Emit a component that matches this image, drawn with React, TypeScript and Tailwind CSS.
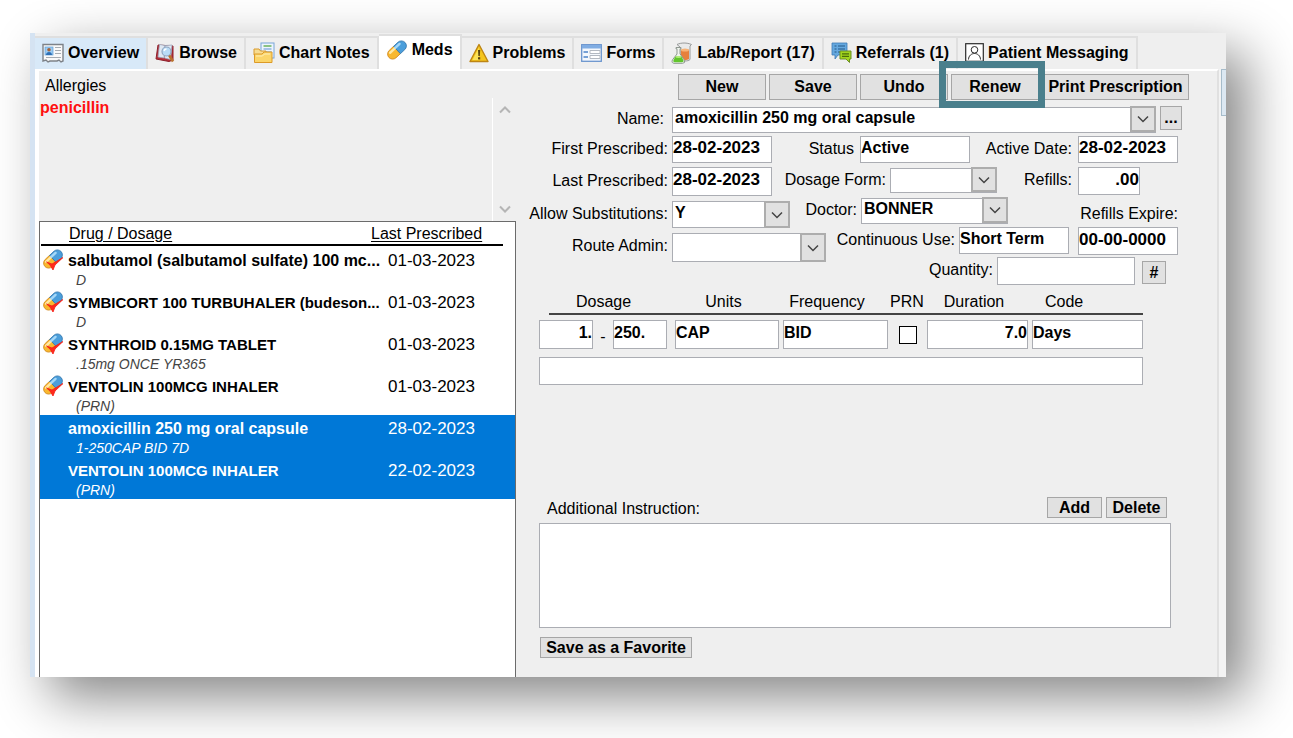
import { useState, type ReactNode } from "react";

type Med = {
  name: string;
  dose: string;
  date: string;
  icon: boolean;
  selected: boolean;
};

const meds: Med[] = [
  { name: "salbutamol (salbutamol sulfate) 100 mc...", dose: "D", date: "01-03-2023", icon: true, selected: false },
  { name: "SYMBICORT 100 TURBUHALER (budeson...", dose: "D", date: "01-03-2023", icon: true, selected: false },
  { name: "SYNTHROID 0.15MG TABLET", dose: ".15mg ONCE YR365", date: "01-03-2023", icon: true, selected: false },
  { name: "VENTOLIN 100MCG INHALER", dose: "(PRN)", date: "01-03-2023", icon: true, selected: false },
  { name: "amoxicillin 250 mg oral capsule", dose: "1-250CAP BID 7D", date: "28-02-2023", icon: false, selected: true },
  { name: "VENTOLIN 100MCG INHALER", dose: "(PRN)", date: "22-02-2023", icon: false, selected: true },
];

function OverviewIcon() {
  return (
    <svg width="22" height="20" viewBox="0 0 22 20">
      <path d="M1 1.500h20V18l-2 1-2-2-2 1H8l-2 1-2-2-3 1z" fill="#fafafa" stroke="#7d8288" strokeWidth="1.400" />
      <rect x="3" y="4" width="8" height="8" fill="#9ccbf2" stroke="#5f9fd6" strokeWidth=".7" />
      <circle cx="7" cy="6.700" r="1.800" fill="#a4643a" />
      <path d="M4 12c0-4 6-4 6 0z" fill="#2d6fb5" />
      <path d="M13 4.500h6M13 7.500h6M13 10.500h6M4 14.500h15" stroke="#a6acb2" strokeWidth="1.200" />
    </svg>
  );
}

function BrowseIcon() {
  return (
    <svg width="20" height="20" viewBox="0 0 20 20">
      <path d="M3 2 1 16l13 2.500 4-1.500V3z" fill="#b5303a" stroke="#8d1f2a" />
      <path d="M4.500 1.500 3 14l6 1 1-12.500zM10 2.500 9.500 15l6 1.500L17 2z" fill="#dfe8f3" stroke="#9aa7bb" strokeWidth=".7" />
      <path d="m14 12 4 6.500" stroke="#b8722e" strokeWidth="2.600" />
      <circle cx="11.500" cy="8.500" r="4.500" fill="#b9dcf7" stroke="#8fa5c0" strokeWidth="1.200" />
      <path d="M9 8q.5-2 2.500-2" stroke="#fff" strokeWidth="1.300" fill="none" />
    </svg>
  );
}

function NotesIcon() {
  return (
    <svg width="22" height="22" viewBox="0 0 22 22">
      <rect x="8" y="1" width="13" height="15" fill="#edf5fd" stroke="#78a5d8" />
      <path d="M10.500 4h8" stroke="#69b05b" strokeWidth="1.500" />
      <path d="M10.500 7h8M10.500 10h8M14 13h5" stroke="#8db2df" strokeWidth="1.300" />
      <path d="M1 7h5l1.500 2H13v4H1z" fill="#f7dc91" stroke="#d99a2d" />
      <path d="M1.500 12H9l2-2h8v10.500H1.500z" fill="#fbd569" stroke="#dc9a28" />
      <path d="M3 14h6.500l2-2H17" stroke="#fff0b8" fill="none" />
    </svg>
  );
}

function PillIcon({ checked = false }: { checked?: boolean }) {
  return (
    <svg width="22" height="22" viewBox="0 0 22 22">
      <g transform="rotate(-43 11 11)">
        <path d="M11 6H5a5 5 0 0 0 0 10h6z" fill="#f9b82f" stroke="#cf861c" strokeWidth=".8" />
        <path d="M11 6h6a5 5 0 0 1 0 10h-6z" fill="#4b9edb" stroke="#3577ad" strokeWidth=".8" />
        <path d="M4 8.300h6.500" stroke="#ffe8a6" strokeWidth="2.400" strokeLinecap="round" />
        <path d="M11.500 8.300H17" stroke="#a5d8f8" strokeWidth="2.400" strokeLinecap="round" />
      </g>
      {checked && <path d="m4.500 14 5.500 2L21 9.500 13 17l-2 5-3-5z" fill="#ff2a1c" stroke="#f41c14" strokeWidth=".8" />}
    </svg>
  );
}

function WarningIcon() {
  return (
    <svg width="20" height="20" viewBox="0 0 20 20">
      <path d="M10 1.500 19 18.500H1z" fill="#f5c51d" stroke="#bd8514" strokeWidth="1.400" strokeLinejoin="round" />
      <path d="M10 4.500 3.500 17H10z" fill="#fbe25a" />
      <path d="M9 7h2.200l-.4 6H9.400z" fill="#5a4510" />
      <rect x="9" y="14.200" width="2.200" height="2.200" fill="#5a4510" />
    </svg>
  );
}

function FormsIcon() {
  return (
    <svg width="21" height="18" viewBox="0 0 21 18">
      <rect x=".7" y=".7" width="19.600" height="16.600" fill="#f4f8fd" stroke="#6a94cd" strokeWidth="1.300" />
      <path d="M1 1h19v3.500H1z" fill="#80ade3" />
      <path d="M2.500 8H7M2.500 13H7" stroke="#4c83c8" strokeWidth="1.400" />
      <path d="M9 6.500h10v3H9zM9 11.500h10v3H9z" fill="#fff" stroke="#b3b9c1" />
    </svg>
  );
}

function LabIcon() {
  return (
    <svg width="22" height="22" viewBox="0 0 22 22">
      <path d="M6 2.500c4-2 10-2 14.500 0L19 4v13.500c-2 2-8 2-10 0V5z" fill="#e9eaea" stroke="#989a9a" />
      <path d="M10 8c2-1.500 6-1.500 8 0v9c-2 1.500-6 1.500-8 0z" fill="#e6803c" />
      <ellipse cx="14" cy="8" rx="4" ry="1.500" fill="#f7b377" />
      <path d="M5 5.500h5v1.300H9v5l4.500 6.500q1 3-2 3H3q-3-.5-1.500-3.500L6 12V6.800H5z" fill="#f0f4ee" stroke="#8f9891" />
      <path d="M4.500 14.500h6l2 4q.5 1.800-1.500 1.800H3.500q-2-.5-1-2.300z" fill="#62c52c" />
      <ellipse cx="7.500" cy="15" rx="3" ry="1.100" fill="#b0ec75" />
    </svg>
  );
}

function ReferralIcon() {
  return (
    <svg width="21" height="21" viewBox="0 0 21 21">
      <path d="M1 1h15v12H7l-3 4v-4H1z" fill="#64a8df" stroke="#3c78b4" strokeWidth=".8" />
      <path d="M3.500 4h2M7 4h7M3.500 7h2M7 7h7M3.500 10h2M7 10h3" stroke="#245987" strokeWidth="1.100" />
      <path d="M9 9h11v8h-1.500v3.500L15 17H9z" fill="#a1d51d" stroke="#6d8f22" />
      <path d="M11 11.800h7M11 14.300h7" stroke="#4b6c0b" strokeWidth="1.200" />
    </svg>
  );
}

function PersonIcon() {
  return (
    <svg width="19" height="19" viewBox="0 0 19 19" fill="none" stroke="#2b2b2b">
      <rect x=".7" y=".7" width="17.600" height="17.600" fill="#fff" strokeWidth="1.200" />
      <circle cx="9.500" cy="6.800" r="3.300" />
      <path d="M3.500 16.500c.3-8 11.700-8 12 0" />
    </svg>
  );
}

function Chevron({ up = false, className = "" }: { up?: boolean; className?: string }) {
  return (
    <svg width="12" height="8" viewBox="0 0 12 8" className={className} fill="none" stroke="currentColor">
      <path d={up ? "M1 6.500 6 1.500 11 6.500" : "M1 1.500 6 6.500 11 1.500"} />
    </svg>
  );
}

const tabs: { label: string; icon: ReactNode }[] = [
  { label: "Overview", icon: <OverviewIcon /> },
  { label: "Browse", icon: <BrowseIcon /> },
  { label: "Chart Notes", icon: <NotesIcon /> },
  { label: "Meds", icon: <PillIcon /> },
  { label: "Problems", icon: <WarningIcon /> },
  { label: "Forms", icon: <FormsIcon /> },
  { label: "Lab/Report (17)", icon: <LabIcon /> },
  { label: "Referrals (1)", icon: <ReferralIcon /> },
  { label: "Patient Messaging", icon: <PersonIcon /> },
];

const fieldBase = "border border-[#abadb3] bg-white font-bold outline-none";
const labelBase = "whitespace-nowrap text-right leading-[26px]";

function Field({ id, value, className = "", label }: { id: string; value: string; className?: string; label?: string }) {
  return (
    <input
      id={id}
      aria-label={label}
      defaultValue={value}
      className={`${fieldBase} min-w-0 pb-[3px] ${className}`}
    />
  );
}

function Select({ id, value, className = "" }: { id: string; value: string; className?: string }) {
  return (
    <div className={`relative ${className}`}>
      <select
        id={id}
        defaultValue={value}
        className={`${fieldBase} h-full w-full appearance-none pb-[3px] pl-[2px] leading-5`}
      >
        <option value={value}>{value}</option>
      </select>
      <span className="pointer-events-none absolute inset-y-0 right-0 flex w-[26px] items-center justify-center border-2 border-[#adadad] bg-[#e1e1e1] text-[#444]">
        <Chevron className="stroke-[1.5]" />
      </span>
    </div>
  );
}

function Button({ children, className = "" }: { children: ReactNode; className?: string }) {
  return (
    <button
      type="button"
      className={`flex items-center justify-center whitespace-nowrap border border-[#a6a6a6] bg-[#e1e1e1] font-bold ${className}`}
    >
      {children}
    </button>
  );
}

function MedsPanel() {
  return (
    <section className="flex w-[477px] shrink-0 flex-col">
      <div className="flex h-[150px] flex-col">
        <p className="pl-[6px] pt-[3px] leading-6">Allergies</p>
        <div className="flex flex-1">
          <p className="flex-1 pl-px font-bold leading-5 text-[#ff1010]">penicillin</p>
          <div className="flex w-6 flex-col items-center justify-between border-l border-white py-2 text-[#b5b5b5]">
            <Chevron up className="stroke-2" />
            <Chevron className="stroke-2" />
          </div>
        </div>
      </div>

      <div className="flex-1 border border-b-0 border-[#6b6b6b] bg-white">
        <div className="mr-3 ml-px flex h-6 items-start border-b-2 border-black">
          <span className="flex-1 pl-7 leading-6 underline underline-offset-2">Drug / Dosage</span>
          <span className="w-[132px] leading-6 underline underline-offset-2">Last Prescribed</span>
        </div>
        <table className="mt-px w-full table-fixed border-collapse text-left">
          <tbody>
            {meds.map((med, i) => (
              <tr
                key={i}
                className={med.selected ? "h-[42px] bg-[#0078d7] text-white" : "h-[42px]"}
              >
                <td className="w-[28px] p-0 pl-[2px] pt-px align-top">{med.icon && <PillIcon checked />}</td>
                <td className="p-0 align-top">
                  <p
                    className={`whitespace-nowrap pt-[3px] font-bold leading-[22px] ${
                      /^[A-Z]/.test(med.name) ? "text-[15px]" : "text-base"
                    }`}
                  >
                    {med.name}
                  </p>
                  <p
                    className={`pl-2 text-sm italic leading-[17px] ${med.selected ? "text-white" : "text-[#444]"}`}
                  >
                    {med.dose}
                  </p>
                </td>
                <td className="w-[127px] p-0 pt-[3px] align-top text-[17px] leading-[22px]">{med.date}</td>
              </tr>
            ))}
          </tbody>
        </table>
      </div>
    </section>
  );
}

function PrescriptionForm() {
  const [prn, setPrn] = useState(false);

  return (
    <form className="min-w-0 flex-1 pb-[19px] pr-7 pt-[3px]">
      <div className="flex justify-end gap-[3px]">
        <Button className="h-[26px] w-[88px]">New</Button>
        <Button className="h-[26px] w-[88px]">Save</Button>
        <Button className="h-[26px] w-[88px]">Undo</Button>
        <div className="relative">
          <Button className="h-[26px] w-[88px]">Renew</Button>
          <span className="pointer-events-none absolute -bottom-2 -left-3 -right-[6px] -top-[13px] z-10 border-[7px] border-[#4a7f8c]" />
        </div>
        <Button className="h-[26px] w-[147px]">Print Prescription</Button>
      </div>

      <div className="mt-[6px] flex pr-[7px]">
        <label htmlFor="name" className={`${labelBase} w-[156px] pr-2`}>Name:</label>
        <Select id="name" value="amoxicillin 250 mg oral capsule" className="h-[26px] flex-1" />
        <Button className="ml-1 h-6 w-[22px]">...</Button>
      </div>

      <div className="mt-1 pr-[11px]">
        <div className="flex h-[31px]">
          <label htmlFor="first" className={`${labelBase} w-[156px] pr-1`}>First Prescribed:</label>
          <Field id="first" value="28-02-2023" className="h-[27px] w-[100px] text-[17px]" />
          <label htmlFor="status" className={`${labelBase} flex-1 pr-[6px]`}>Status</label>
          <Field id="status" value="Active" className="h-[27px] w-[110px]" />
          <label htmlFor="active" className={`${labelBase} w-[108px] pr-[6px]`}>Active Date:</label>
          <Field id="active" value="28-02-2023" className="h-[27px] w-[100px] text-[17px]" />
        </div>
        <div className="flex h-[30px]">
          <label htmlFor="last" className={`${labelBase} w-[156px] pr-1 pt-px`}>Last Prescribed:</label>
          <Field id="last" value="28-02-2023" className="h-[29px] w-[100px] text-[17px]" />
          <label htmlFor="dosage-form" className={`${labelBase} flex-1 pr-1`}>Dosage Form:</label>
          <Select id="dosage-form" value="" className="h-[25px] w-[107px]" />
          <label htmlFor="refills" className={`${labelBase} w-[81px] pr-[6px]`}>Refills:</label>
          <div className="flex w-[100px] items-start">
            <Field id="refills" value=".00" className="h-[28px] w-[62px] text-right text-[17px]" />
          </div>
        </div>
        <div className="flex h-[30px]">
          <label htmlFor="subs" className={`${labelBase} w-[156px] pr-1 pt-1`}>Allow Substitutions:</label>
          <div className="pt-1">
            <Select id="subs" value="Y" className="h-[27px] w-[118px]" />
          </div>
          <label htmlFor="doctor" className={`${labelBase} flex-1 pr-1`}>Doctor:</label>
          <Select id="doctor" value="BONNER" className="h-[26px] w-[147px]" />
          <label htmlFor="expire" className={`${labelBase} w-[170px] pt-1`}>Refills Expire:</label>
        </div>
        <div className="flex h-[30px]">
          <label htmlFor="route" className={`${labelBase} w-[156px] pr-1 pt-[6px]`}>Route Admin:</label>
          <div className="pt-[6px]">
            <Select id="route" value="" className="h-[29px] w-[154px]" />
          </div>
          <label htmlFor="use" className={`${labelBase} flex-1 pr-1`}>Continuous Use:</label>
          <Field id="use" value="Short Term" className="h-[27px] w-[110px]" />
          <Field id="expire" value="00-00-0000" className="ml-[9px] h-[28px] w-[100px] text-[17px]" />
        </div>
        <div className="flex justify-end pr-3">
          <label htmlFor="qty" className={`${labelBase} pr-1`}>Quantity:</label>
          <Field id="qty" value="" className="h-7 w-[138px]" />
          <Button className="ml-[7px] mt-1 h-[23px] w-6">#</Button>
        </div>
      </div>

      <div className="ml-[23px] mr-[46px] mt-[6px]">
        <div className="ml-[10px] flex h-6 border-b-2 border-[#444] leading-[22px]">
          <span className="w-[115px] pl-[27px]">Dosage</span>
          <span className="w-[119px] text-center">Units</span>
          <span className="w-[88px] text-center">Frequency</span>
          <span className="w-[72px] text-center">PRN</span>
          <span className="w-[62px] text-center">Duration</span>
          <span className="flex-1 pl-10">Code</span>
        </div>
        <div className="mt-[5px] flex">
          <Field id="dose" label="Dosage" value="1." className="h-[29px] w-[54px] text-right" />
          <span className="w-5 pt-[5px] text-center">-</span>
          <Field id="strength" label="Strength" value="250." className="h-[29px] w-[54px]" />
          <Field id="units" label="Units" value="CAP" className="ml-2 h-[29px] w-[104px]" />
          <Field id="freq" label="Frequency" value="BID" className="ml-1 h-[29px] w-[105px]" />
          <input
            type="checkbox"
            aria-label="PRN"
            checked={prn}
            onChange={(e) => setPrn(e.target.checked)}
            className="ml-[11px] mt-[6px] size-[18px] appearance-none border border-black bg-white checked:bg-gray-600"
          />
          <Field id="duration" label="Duration" value="7.0" className="ml-[10px] h-[29px] w-[101px] text-right" />
          <Field id="code" label="Code" value="Days" className="ml-1 h-[29px] flex-1" />
        </div>
        <input
          aria-label="Directions"
          className="mt-2 h-7 w-full border border-[#abadb3] bg-white outline-none"
        />
      </div>

      <div className="ml-[23px] mr-[18px] mt-28">
        <div className="flex h-[26px] items-start pr-1">
          <label htmlFor="instruction" className="flex-1 pl-2 leading-6">Additional Instruction:</label>
          <Button className="h-[21px] w-[55px]">Add</Button>
          <Button className="ml-1 h-[21px] w-[61px]">Delete</Button>
        </div>
        <textarea
          id="instruction"
          className="block h-[105px] w-full resize-none border border-[#abadb3] bg-white outline-none"
        />
        <Button className="ml-px mt-[9px] h-[21px] w-[152px]">Save as a Favorite</Button>
      </div>
    </form>
  );
}

export default function App() {
  const [active, setActive] = useState("Meds");

  return (
    <div className="min-h-screen overflow-hidden bg-white pb-[61px] pl-[30px] pr-[67px] pt-[33px] font-['Liberation_Sans',Arial,sans-serif] text-base text-black">
      <main className="border-l-[5px] border-[#d5e3f2] bg-[#efefef] shadow-[20px_20px_50px_rgba(0,0,0,0.48)]">
        <nav role="tablist" className="flex h-9 items-end">
          {tabs.map((tab) => (
            <button
              key={tab.label}
              type="button"
              role="tab"
              aria-selected={tab.label === active}
              onClick={() => setActive(tab.label)}
              className={`flex items-center gap-1 whitespace-nowrap border-r-2 border-t-2 border-[#dfdfdf] px-[7px] font-bold ${
                tab.label === active
                  ? "h-[35px] bg-white pb-[5px]"
                  : tab.label === "Overview"
                    ? "h-[33px] bg-[#d8e9f8] pb-[2px]"
                    : "h-[33px] pb-[2px]"
              }`}
            >
              {tab.icon}
              {tab.label}
            </button>
          ))}
        </nav>

        <div className="flex">
          <div className="flex min-w-0 flex-1 border-l-4 border-r-2 border-t-2 border-l-white border-r-[#e0e0e0] border-t-white">
            <MedsPanel />
            <PrescriptionForm />
          </div>
          <div className="w-[7px] shrink-0 bg-[#f3f3f3] pl-[2px]">
            <div className="h-[47px] border border-r-0 border-[#a6bccb] bg-[#dce8f2]" />
          </div>
        </div>
      </main>
    </div>
  );
}
